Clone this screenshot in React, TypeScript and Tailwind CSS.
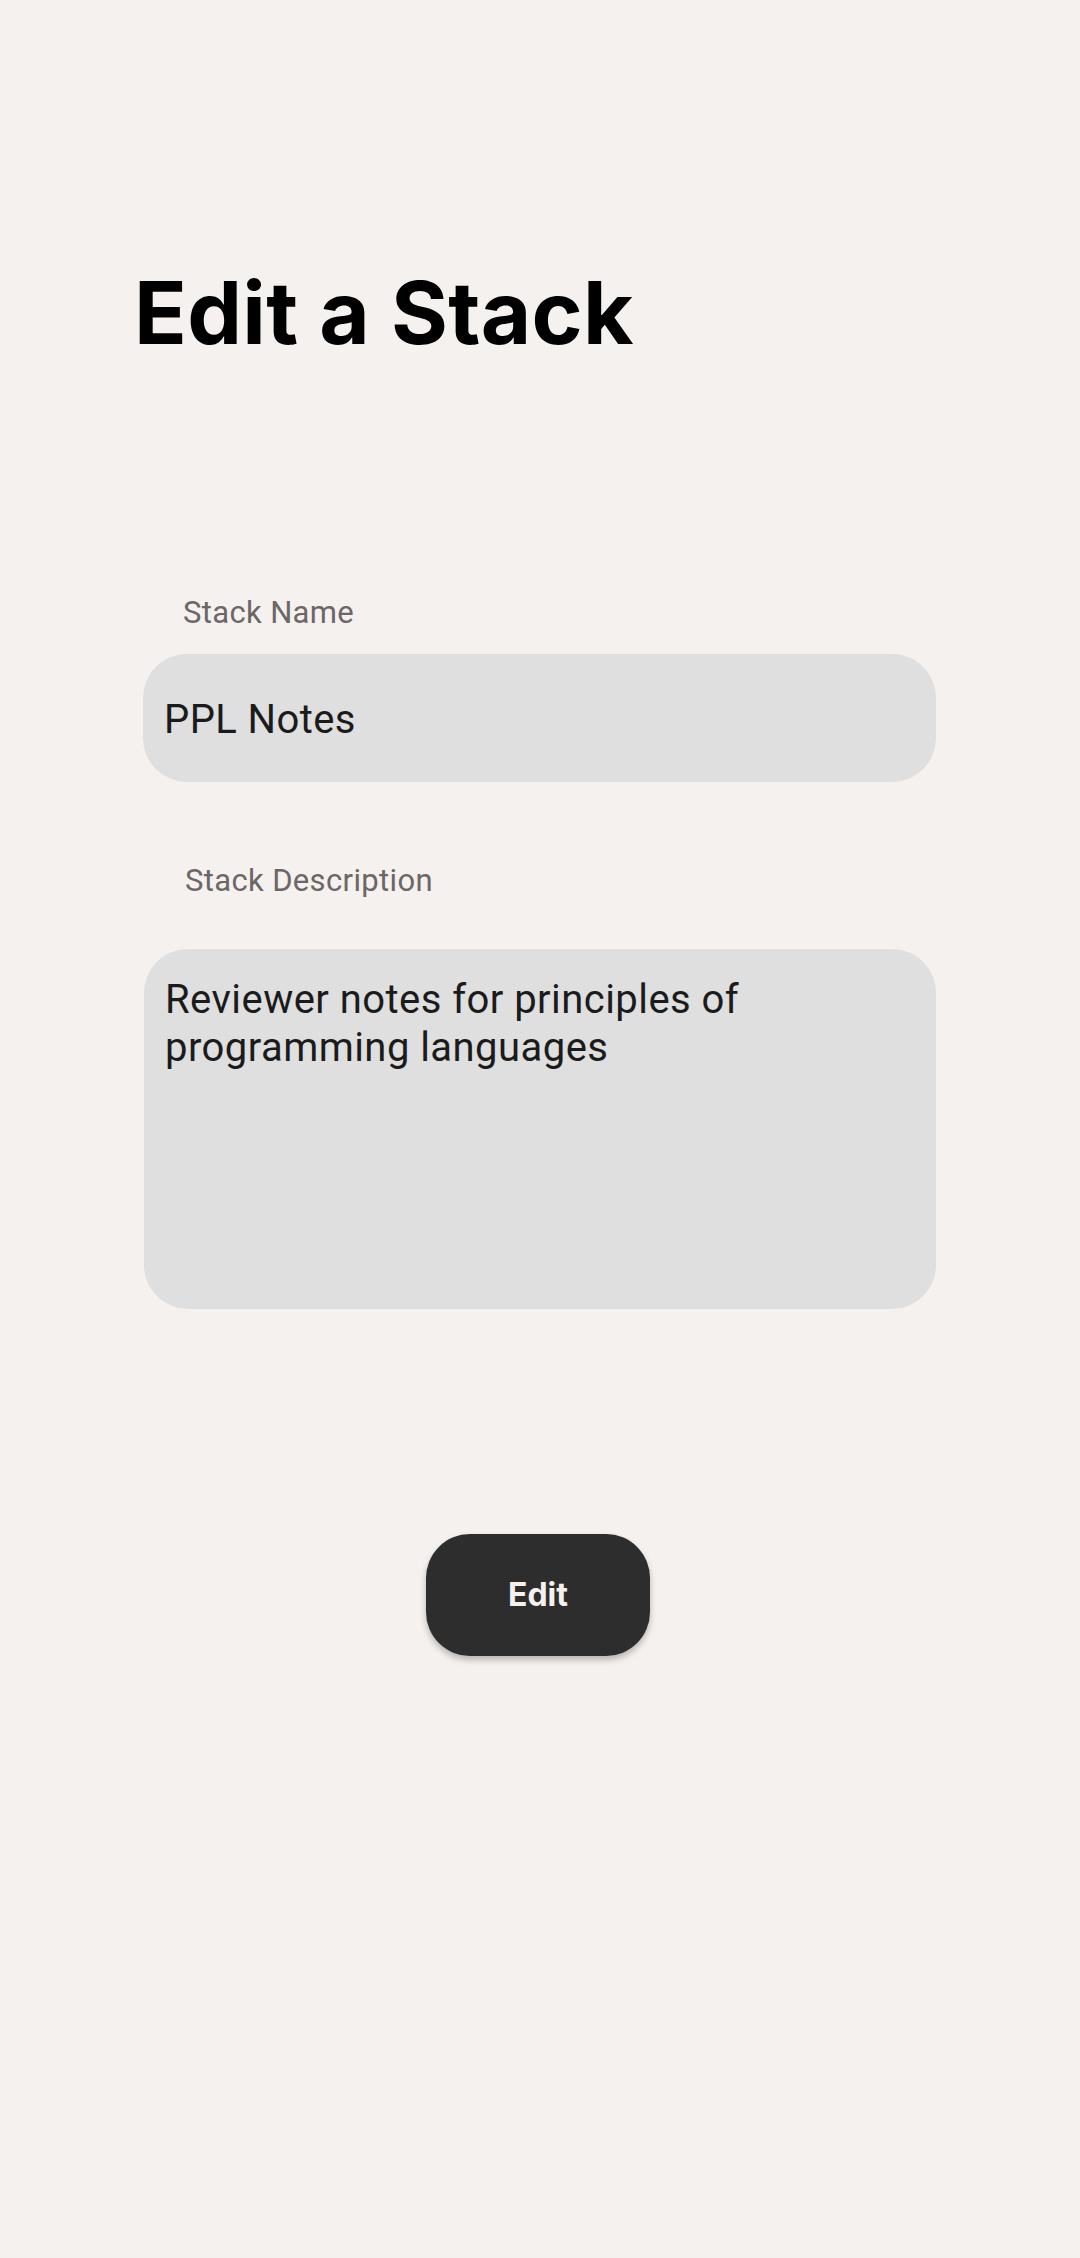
export default function App() {
  return (
    <div className="min-h-[2258px] w-full bg-[#f5f1ee] font-['Roboto',sans-serif]">
      <h1 className="pl-[134px] pt-[269px] font-['Inter',sans-serif] text-[87px] leading-none font-bold tracking-[0.3px] text-black">
        Edit a Stack
      </h1>

      <label className="block mt-[241px] ml-[183px] text-[31px] leading-none tracking-[0.35px] text-[#6b6767]">
        Stack Name
      </label>
      <div className="mt-[26px] ml-[143px] w-[793px] h-[128px] rounded-[44px] bg-[#dfdfdf] flex items-center pl-[21px] pt-[4px]">
        <span className="text-[40px] leading-none tracking-[0.4px] text-[#1c1b1b]">PPL Notes</span>
      </div>

      <label className="block mt-[83px] ml-[185px] text-[31px] leading-none tracking-[0.35px] text-[#6b6767]">
        Stack Description
      </label>
      <div className="mt-[53px] ml-[144px] w-[792px] h-[360px] rounded-[44px] bg-[#dfdfdf] pt-[27px] pl-[21px] pr-[30px]">
        <p className="text-[40px] leading-[48px] tracking-[0.45px] text-[#1c1b1b]">
          Reviewer notes for principles of programming languages
        </p>
      </div>

      <div className="flex justify-center mt-[225px] pr-[4px]">
        <button className="w-[224px] h-[122px] rounded-[44px] bg-[#2d2d2d] shadow-[0_4px_6px_rgba(0,0,0,0.25)] font-['Inter',sans-serif] text-[32px] font-bold text-[#f5f1ee]">
          Edit
        </button>
      </div>
    </div>
  );
}
